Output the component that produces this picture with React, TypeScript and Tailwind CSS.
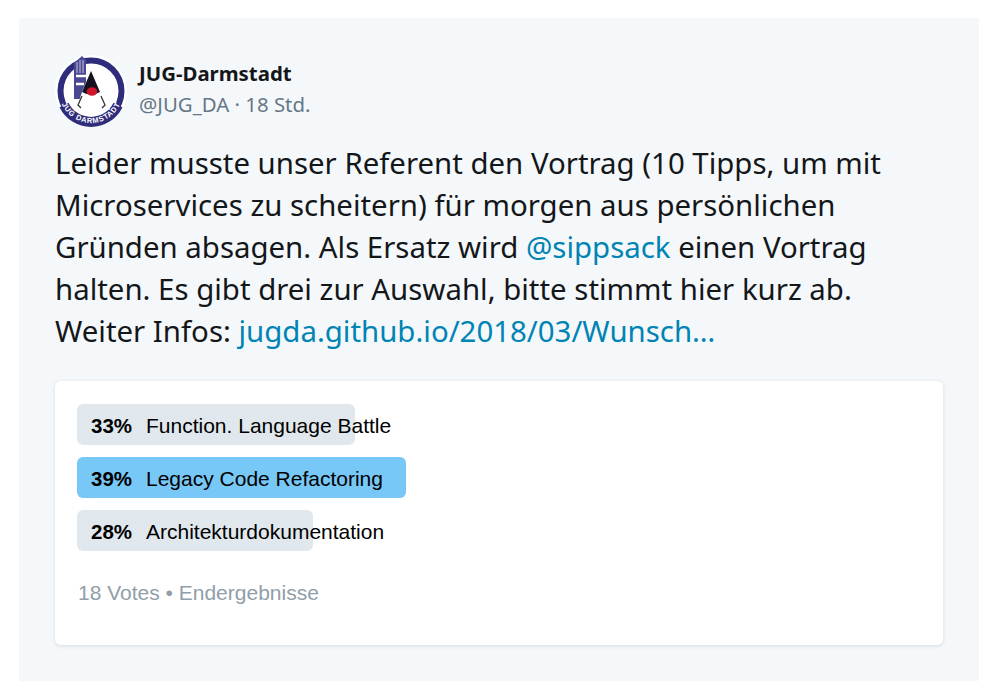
const options = [
  { pct: '33%', label: 'Function. Language Battle', width: 'w-[278px]', bar: 'bg-[#e1e8ed]' },
  { pct: '39%', label: 'Legacy Code Refactoring', width: 'w-[329px]', bar: 'bg-[#77c7f7]' },
  { pct: '28%', label: 'Architekturdokumentation', width: 'w-[236px]', bar: 'bg-[#e1e8ed]' },
];

function Avatar() {
  return (
    <svg width="72" height="72" viewBox="0 0 72 72" className="shrink-0">
      <circle cx="36" cy="36" r="36" fill="#fff" />
      <circle cx="36" cy="36" r="30.5" fill="none" stroke="#2f2c7c" strokeWidth="6" />
      {/* thicker lower part of the ring, carries the lettering */}
      <path d="M9 50 A30 30 0 0 0 63 50" fill="none" stroke="#2f2c7c" strokeWidth="10" />
      {/* building */}
      <path d="M19 44 L19 8 L27 1 L31 5 L31 44 Z" fill="#4a4892" />
      <path d="M22 7 L22 18 M25 5 L25 18 M28 5 L28 18" stroke="#c3c5e0" strokeWidth="1" />
      <path d="M21 21 H31 M21 29 H29" stroke="#fff" strokeWidth="2.4" />
      {/* duke */}
      <path d="M36 16 L44 34 L51 46 L55 55 L45 54 Q36 50 27 54 L19 56 L24 46 L28 34 Z" fill="#fff" />
      <path d="M36 16 L45 37 Q36 42 27 37 Z" fill="#14121f" />
      <path d="M27 41 L23 50 L26 53 M46 41 L50 50 L47 53" stroke="#333" strokeWidth="1.3" fill="none" />
      <ellipse cx="37" cy="36.5" rx="5.2" ry="4.2" fill="#d3142a" />
      <defs>
        <path id="ring" d="M5 44 A32 32 0 0 0 67 44" />
      </defs>
      <text fontFamily="Liberation Sans, sans-serif" fontSize="7.5" fontWeight="700" fill="#fff" letterSpacing="0.7">
        <textPath href="#ring" startOffset="50%" textAnchor="middle">JUG DARMSTADT</textPath>
      </text>
    </svg>
  );
}

export default function App() {
  return (
    <div className="min-h-screen bg-white pt-[18px] pl-[19px] font-['Noto_Sans',sans-serif]">
      <div className="w-[960px] h-[663px] rounded-[2px] bg-[#f5f8fa] pt-[37px] pl-[36px]">
        <div className="flex items-center">
          <Avatar />
          <div className="ml-[12px] -mt-[5px]">
            <div className="text-[20.4px] leading-[30px] font-bold text-[#14171a]">JUG-Darmstadt</div>
            <div className="text-[20.4px] leading-[32px] text-[#657786]">@JUG_DA · 18 Std.</div>
          </div>
        </div>

        <p className="mt-[15px] w-[890px] text-[29.4px] leading-[42px] text-[#14171a]">
          Leider musste unser Referent den Vortrag (10 Tipps, um mit
          <br />
          Microservices zu scheitern) für morgen aus persönlichen
          <br />
          Gründen absagen. Als Ersatz wird <span className="text-[#0084b4]">@sippsack</span> einen Vortrag
          <br />
          halten. Es gibt drei zur Auswahl, bitte stimmt hier kurz ab.
          <br />
          Weiter Infos: <span className="text-[#0084b4]">jugda.github.io/2018/03/Wunsch…</span>
        </p>

        <div className="mt-[29px] w-[888px] h-[264px] rounded-[6px] bg-white shadow-[0_1px_4px_rgba(0,0,0,0.12)] pt-[23px] px-[22px] font-['Liberation_Sans',sans-serif]">
          <div className="flex flex-col gap-[12px]">
            {options.map((o) => (
              <div key={o.pct} className="relative h-[41px] flex items-baseline pt-[6px] text-[21px] text-black">
                <div className={`absolute left-0 top-0 h-full rounded-[6px] ${o.width} ${o.bar}`} />
                <span className="relative ml-[14px] w-[55px] text-[20.5px] font-bold">{o.pct}</span>
                <span className="relative">{o.label}</span>
              </div>
            ))}
          </div>
          <div className="mt-[30px] ml-[1px] text-[21px] leading-[23px] text-[#8f9ea9]">18 Votes • Endergebnisse</div>
        </div>
      </div>
    </div>
  );
}
